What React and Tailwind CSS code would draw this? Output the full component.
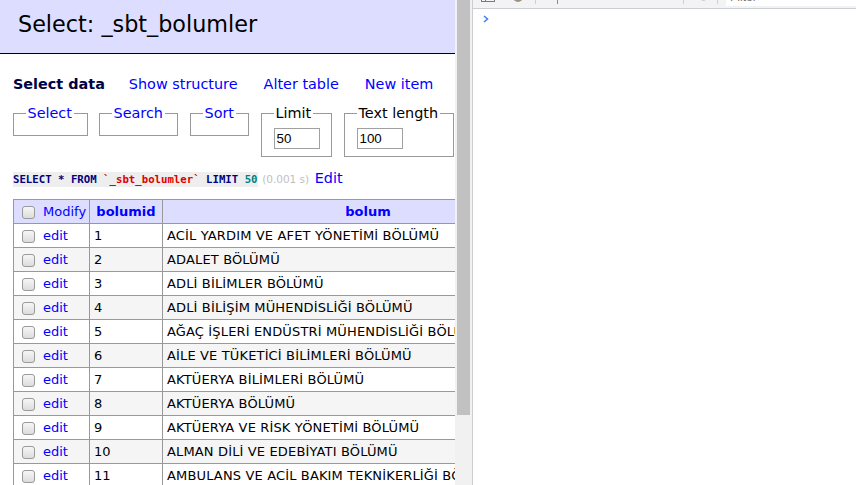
import React from 'react';

const rows = [
  [1, 'ACİL YARDIM VE AFET YÖNETİMİ BÖLÜMÜ'],
  [2, 'ADALET BÖLÜMÜ'],
  [3, 'ADLİ BİLİMLER BÖLÜMÜ'],
  [4, 'ADLİ BİLİŞİM MÜHENDİSLİĞİ BÖLÜMÜ'],
  [5, 'AĞAÇ İŞLERİ ENDÜSTRİ MÜHENDİSLİĞİ BÖLÜMÜ'],
  [6, 'AİLE VE TÜKETİCİ BİLİMLERİ BÖLÜMÜ'],
  [7, 'AKTÜERYA BİLİMLERİ BÖLÜMÜ'],
  [8, 'AKTÜERYA BÖLÜMÜ'],
  [9, 'AKTÜERYA VE RİSK YÖNETİMİ BÖLÜMÜ'],
  [10, 'ALMAN DİLİ VE EDEBİYATI BÖLÜMÜ'],
  [11, 'AMBULANS VE ACİL BAKIM TEKNİKERLİĞİ BÖLÜMÜ'],
];

const Check = () => (
  <span className="inline-block align-middle w-[13px] h-[13px] ml-[4px] mr-[8px] rounded-[3px] border border-[#9a9a9a] bg-gradient-to-b from-[#f6f6f6] to-[#dcdcdc]" />
);

const Box = ({ legend, link, width, ml, children }) => (
  <fieldset
    className={`border border-[#999] px-[11.5px] pt-[6px] pb-[7px] ${width} ${ml}`}
  >
    <legend className={`px-[2px] leading-[18px] ${link ? 'text-[#00f]' : 'text-black'}`}>
      {legend}
    </legend>
    {children}
  </fieldset>
);

const Input = ({ value }) => (
  <div className="w-[46px] h-[21px] border border-[#a0a0a0] bg-white pl-[2px] font-['Liberation_Sans',Arial,sans-serif] text-[13.33px] leading-[19px] text-black">
    {value}
  </div>
);

export default function App() {
  return (
    <div className="flex w-[856px] h-[485px] overflow-hidden bg-white">
      {/* adminer page */}
      <div className="w-[455px] shrink-0 overflow-hidden font-['DejaVu_Sans',Verdana,sans-serif] text-[14.4px] leading-[18px] text-black">
        <h2 className="h-[54px] bg-[#ddf] border-b border-black pl-[18px] pt-[10px] text-[22.3px] leading-[28px] font-normal">
          Select: _sbt_bolumler
        </h2>
        <div className="pl-[13px]">
          <p className="mt-[21px] flex whitespace-nowrap">
            <span className="font-bold text-[#000044]">Select data</span>
            <a className="ml-[24px] text-[#00f]">Show structure</a>
            <a className="ml-[26px] text-[#00f]">Alter table</a>
            <a className="ml-[26px] text-[#00f]">New item</a>
          </p>
          <div className="mt-[11px] flex items-start">
            <Box legend="Select" link width="w-[75px]" ml="" />
            <Box legend="Search" link width="w-[79px]" ml="ml-[11px]" />
            <Box legend="Sort" link width="w-[59px]" ml="ml-[12px]" />
            <Box legend="Limit" width="w-[70px]" ml="ml-[12px]">
              <Input value="50" />
            </Box>
            <Box legend="Text length" width="w-[110px]" ml="ml-[12px]">
              <Input value="100" />
            </Box>
          </div>
          <p className="mt-[12px] whitespace-nowrap">
            <code className="bg-[#eee] font-['DejaVu_Sans_Mono',monospace] text-[10.7px] font-bold py-[1px] text-[#000080]">
              SELECT * FROM <span className="text-[#d00]">`_sbt_bolumler`</span> LIMIT{' '}
              <span className="text-[#007f7f]">50</span>
            </code>{' '}
            <span className="text-[10.5px] text-[#c0c0c0]">(0.001 s)</span>{' '}
            <a className="ml-[1px] text-[#00f]">Edit</a>
          </p>
          <table className="mt-[10px] w-[560px] table-fixed border-collapse border-t border-l border-[#999] text-[13px] leading-[16px]">
            <colgroup>
              <col className="w-[76px]" />
              <col className="w-[73px]" />
              <col className="w-[411px]" />
            </colgroup>
            <thead>
              <tr className="bg-[#ddf]">
                <th className="h-[24px] border-r border-b border-[#999] px-[4px] text-left font-normal whitespace-nowrap">
                  <Check />
                  <a className="text-[#00f]">Modify</a>
                </th>
                <th className="h-[24px] border-r border-b border-[#999] px-[4px] text-center font-bold text-[#00f]">
                  bolumid
                </th>
                <th className="h-[24px] border-r border-b border-[#999] px-[4px] text-center font-bold text-[#00f]">
                  bolum
                </th>
              </tr>
            </thead>
            <tbody>
              {rows.map(([id, name], i) => (
                <tr key={id} className={i % 2 ? 'bg-[#f5f5f5]' : 'bg-white'}>
                  <td className="h-[24px] border-r border-b border-[#999] px-[4px] whitespace-nowrap">
                    <Check />
                    <a className="text-[#00f]">edit</a>
                  </td>
                  <td className="h-[24px] border-r border-b border-[#999] px-[4px]">{id}</td>
                  <td className="h-[24px] border-r border-b border-[#999] px-[4px] whitespace-nowrap overflow-hidden tracking-[0.15px]">
                    {name}
                  </td>
                </tr>
              ))}
            </tbody>
          </table>
        </div>
      </div>

      {/* page scrollbar */}
      <div className="w-[17px] shrink-0 bg-[#f1f1f1] px-[2px]">
        <div className="h-[415px] bg-[#c1c1c1]" />
      </div>

      {/* devtools console */}
      <div className="flex-1 border-l border-[#cbcdd1] bg-white flex flex-col">
        <div className="h-[9px] shrink-0 bg-[#f3f3f3] border-b border-[#cacdd1] flex items-start overflow-hidden">
          <div className="ml-[8px] -mt-[11px] w-[14px] h-[13px] border border-[#7a7a7a] flex">
            <div className="w-[4px] border-r border-[#7a7a7a]" />
          </div>
          <div className="ml-[18px] -mt-[8px] w-[10px] h-[10px] rounded-full bg-[#9b917f]" />
          <div className="ml-[12px] w-px h-[4px] bg-[#cfcfcf]" />
          <div className="ml-[21px] w-px h-[4px] bg-[#8a8a8a]" />
          <div className="ml-[125px] w-px h-[4px] bg-[#cfcfcf]" />
          <div className="ml-[17px] -mt-[4px] w-[5px] h-[5px] rounded-full bg-[#cfcfcf]" />
          <div className="ml-[11px] w-px h-[4px] bg-[#cfcfcf]" />
          <div className="ml-[8px] flex-1 h-[6px] bg-white overflow-hidden">
            <div className="-mt-[10px] ml-[4px] font-['Liberation_Sans',Arial,sans-serif] text-[12px] leading-[14px] text-[#777]">
              Filter
            </div>
          </div>
        </div>
        <div className="pl-[10px] pt-[6px]">
          <svg width="6" height="8" viewBox="0 0 6 8">
            <path d="M1 1 L4.5 4 L1 7" fill="none" stroke="#3f82f0" strokeWidth="1.6" />
          </svg>
        </div>
      </div>
    </div>
  );
}
